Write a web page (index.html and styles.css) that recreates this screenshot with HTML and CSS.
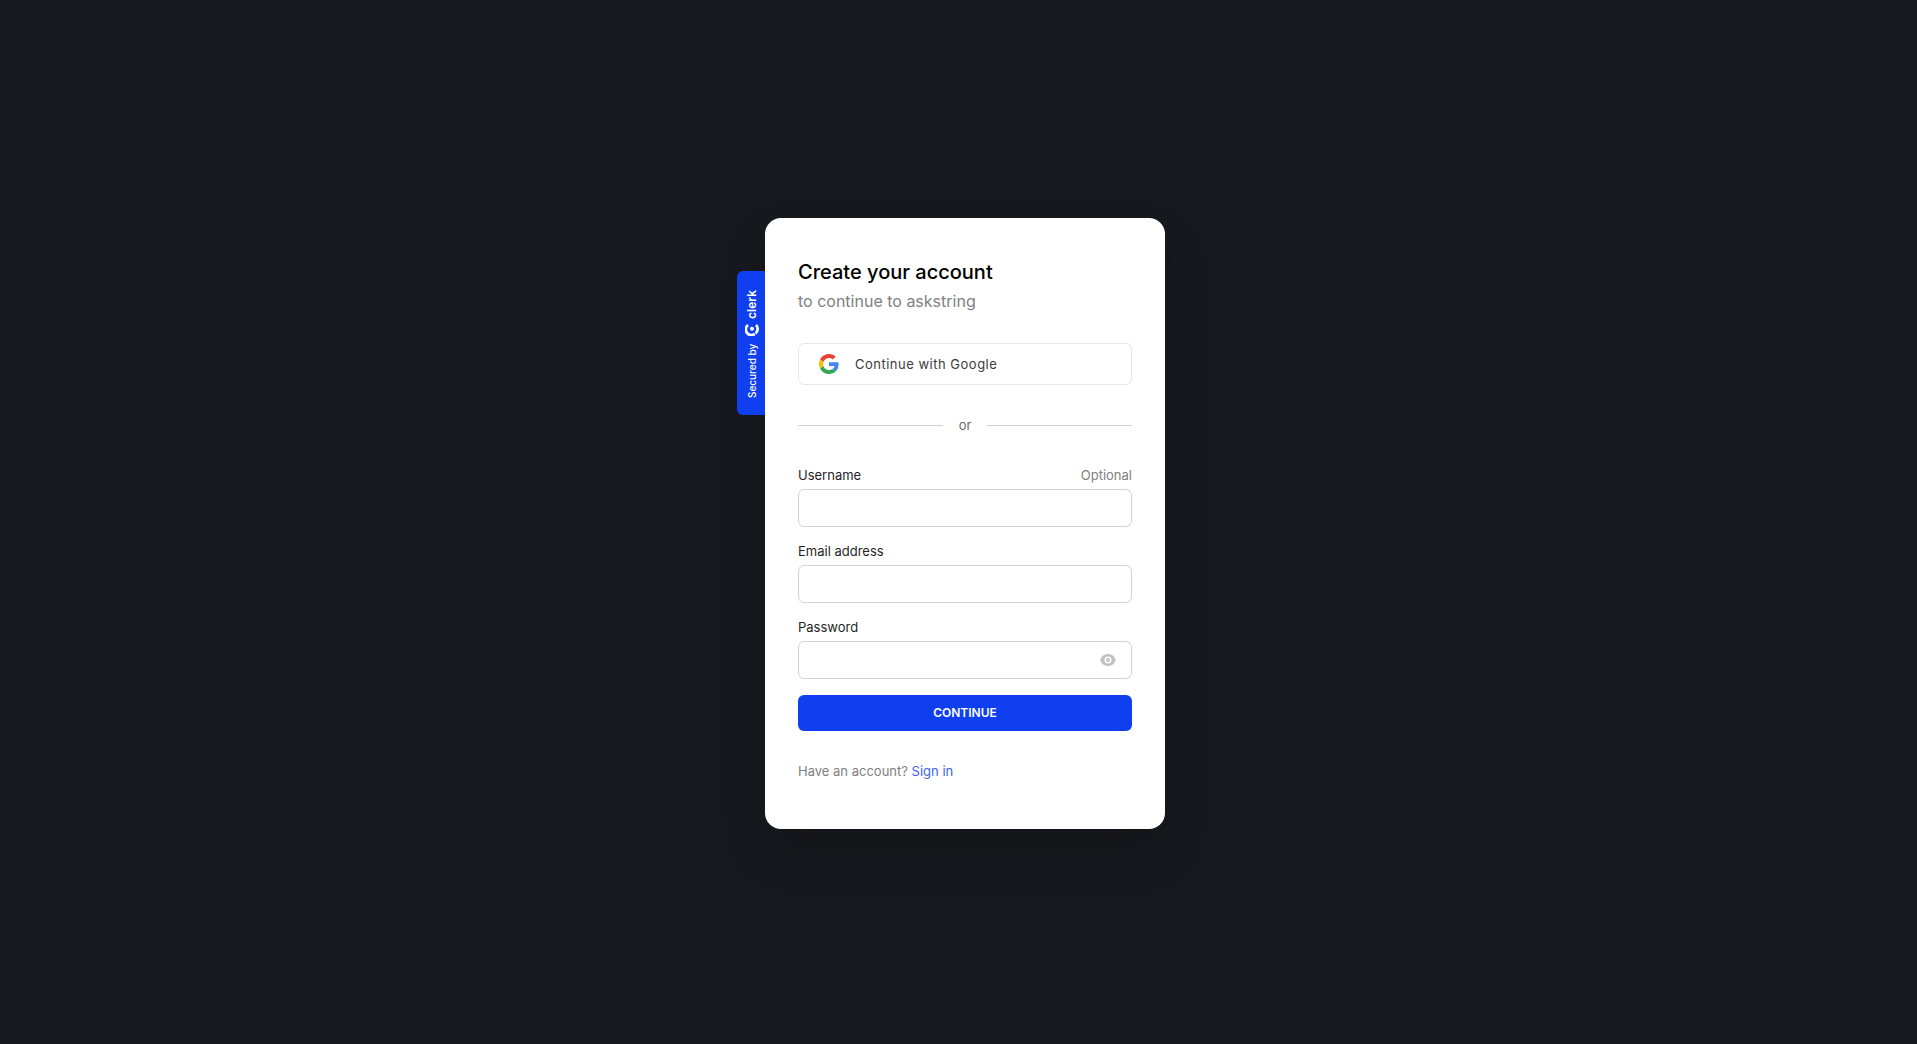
FILE: index.html
```
<!DOCTYPE html>
<html lang="en">
<head>
    <meta charset="UTF-8">
    <meta name="viewport" content="width=device-width, initial-scale=1.0">
    <title>Create your account</title>
    <link rel="stylesheet" href="styles.css">
</head>
<body>

<main class="card">
    <!-- Badge on the left side of the card -->
    <a class="badge" href="#">
        <span>Secured by</span>
        <span class="brand">
            <svg class="brand-icon" viewBox="0 0 14 14" aria-hidden="true">
                <path d="M11 3A5.600 5.600 0 0 0 2.100 9.800" fill="none" stroke="#fff" stroke-width="2.700"/>
                <path d="M2.600 10.500A5.600 5.600 0 0 0 11 11" fill="none" stroke="#fff" stroke-width="2.700"/>
                <circle cx="7.200" cy="7" r="2" fill="#fff"/>
            </svg>
            <span class="brand-name">clerk</span>
        </span>
    </a>

    <h1>Create your account</h1>
    <p class="subtitle">to continue to askstring</p>

    <button type="button" class="google-button">
        <svg class="google-icon" viewBox="0 0 48 48" aria-hidden="true">
            <path fill="#EA4335" d="M24 9.500c3.540 0 6.710 1.220 9.210 3.600l6.850-6.850C35.900 2.380 30.470 0 24 0 14.620 0 6.510 5.380 2.560 13.220l7.980 6.190C12.430 13.720 17.740 9.500 24 9.500z"/>
            <path fill="#4285F4" d="M46.980 24.550c0-1.570-.15-3.090-.38-4.550H24v9.020h12.940c-.58 2.960-2.260 5.480-4.780 7.180l7.730 6c4.510-4.180 7.090-10.360 7.090-17.650z"/>
            <path fill="#FBBC05" d="M10.530 28.590c-.48-1.450-.76-2.990-.76-4.590s.27-3.140.76-4.590l-7.980-6.190C.92 16.460 0 20.120 0 24c0 3.880.92 7.540 2.560 10.780l7.970-6.190z"/>
            <path fill="#34A853" d="M24 48c6.480 0 11.930-2.130 15.890-5.810l-7.730-6c-2.150 1.450-4.920 2.300-8.160 2.300-6.260 0-11.570-4.220-13.470-9.910l-7.980 6.190C6.510 42.620 14.620 48 24 48z"/>
        </svg>
        Continue with Google
    </button>

    <div class="divider">or</div>

    <form class="form">
        <div class="field">
            <div class="field-top">
                <label for="username">Username</label>
                <span class="hint">Optional</span>
            </div>
            <input type="text" id="username" name="username">
        </div>
        <div class="field">
            <label for="email">Email address</label>
            <input type="email" id="email" name="email">
        </div>
        <div class="field">
            <label for="password">Password</label>
            <div class="password-box">
                <input type="password" id="password" name="password">
                <button type="button" class="eye-button" aria-label="Show password">
                    <svg viewBox="0 0 16 12" aria-hidden="true">
                        <path fill="#c1c1c1" fill-rule="evenodd" d="M8 0C4.500 0 1.600 2.200.400 5.500a1.300 1.300 0 0 0 0 1C1.600 9.800 4.500 12 8 12s6.400-2.200 7.600-5.500a1.300 1.300 0 0 0 0-1C14.400 2.200 11.500 0 8 0zm0 2.500a3.500 3.500 0 1 1 0 7 3.500 3.500 0 0 1 0-7z"/>
                        <circle cx="8" cy="6" r="1.900" fill="#c1c1c1"/>
                    </svg>
                </button>
            </div>
        </div>
        <button type="submit" class="submit-button">Continue</button>
    </form>

    <p class="footer">Have an account? <a href="#">Sign in</a></p>
</main>

</body>
</html>
```
FILE: styles.css
```
* {
    box-sizing: border-box;
}
body {
    font-family: Inter, "Liberation Sans", sans-serif;
    margin: 0;
    padding: 3px 0 0 13px;
    min-height: 100vh;
    display: flex;
    justify-content: center;
    align-items: center;
    background-color: #18191e;
}
.card {
    position: relative;
    width: 100%;
    max-width: 400px;
    padding: 40px 33px 49px;
    background-color: white;
    border-radius: 16px;
    box-shadow: 0 24px 48px rgba(0, 0, 0, 0.16);
}
h1 {
    margin: 0;
    font-size: 20px;
    line-height: 28px;
    font-weight: 500;
    color: black;
}
.subtitle {
    margin: 3px 0 0;
    font-size: 16px;
    line-height: 24px;
    font-weight: 400;
    color: #808080;
}
button {
    font-family: inherit;
    cursor: pointer;
}
.google-button {
    display: flex;
    align-items: center;
    gap: 16px;
    width: 100%;
    height: 42px;
    margin-top: 30px;
    padding: 0 20px;
    font-size: 13px;
    letter-spacing: 0.5px;
    color: #3b3b3b;
    background-color: white;
    border: 1px solid #e7e7e7;
    border-radius: 6px;
}
.google-icon {
    width: 20px;
    height: 20px;
}
.divider {
    display: flex;
    align-items: center;
    gap: 16px;
    margin: 32px 0 34px;
    font-size: 13px;
    line-height: 16px;
    color: #6b6b6b;
}
.divider::before,
.divider::after {
    content: "";
    flex: 1;
    height: 1px;
    background-color: #d0d0d0;
}
.form {
    display: flex;
    flex-direction: column;
    gap: 16px;
}
.field {
    display: flex;
    flex-direction: column;
    gap: 6px;
}
.field-top {
    display: flex;
    justify-content: space-between;
}
label,
.hint {
    font-size: 13px;
    line-height: 16px;
}
label {
    color: #1f1f1f;
}
.hint {
    color: #808080;
}
input {
    width: 100%;
    height: 38px;
    padding: 0 12px;
    font-family: inherit;
    font-size: 13px;
    background-color: white;
    border: 1px solid #d2d2d2;
    border-radius: 6px;
}
.password-box {
    position: relative;
    display: flex;
}
.password-box input {
    padding-right: 44px;
}
.eye-button {
    position: absolute;
    top: 0;
    right: 16px;
    height: 100%;
    padding: 0;
    display: flex;
    align-items: center;
    background: none;
    border: none;
}
.eye-button svg {
    width: 16px;
    height: 12px;
}
.submit-button {
    height: 36px;
    font-size: 12px;
    line-height: 16px;
    font-weight: 600;
    text-transform: uppercase;
    color: white;
    background-color: #103fef;
    border: none;
    border-radius: 6px;
}
.footer {
    margin: 31px 0 0;
    font-size: 13px;
    line-height: 18px;
    color: #808080;
}
.footer a {
    color: #3f62f2;
    text-decoration: none;
}
/* Vertical text, read from bottom to top */
.badge {
    position: absolute;
    top: 53px;
    right: 100%;
    display: flex;
    align-items: center;
    gap: 8px;
    width: 28px;
    height: 144px;
    padding: 17px 2px 17px 0;
    writing-mode: vertical-rl;
    transform: rotate(180deg);
    font-size: 10px;
    font-weight: 500;
    line-height: 14px;
    color: white;
    text-decoration: none;
    background-color: #103fef;
    border-radius: 0 6px 6px 0;
}
.brand {
    display: flex;
    align-items: center;
    gap: 3px;
}
.brand-icon {
    width: 14px;
    height: 14px;
    transform: rotate(90deg);
}
.brand-name {
    font-size: 12px;
    font-weight: 600;
}
```
